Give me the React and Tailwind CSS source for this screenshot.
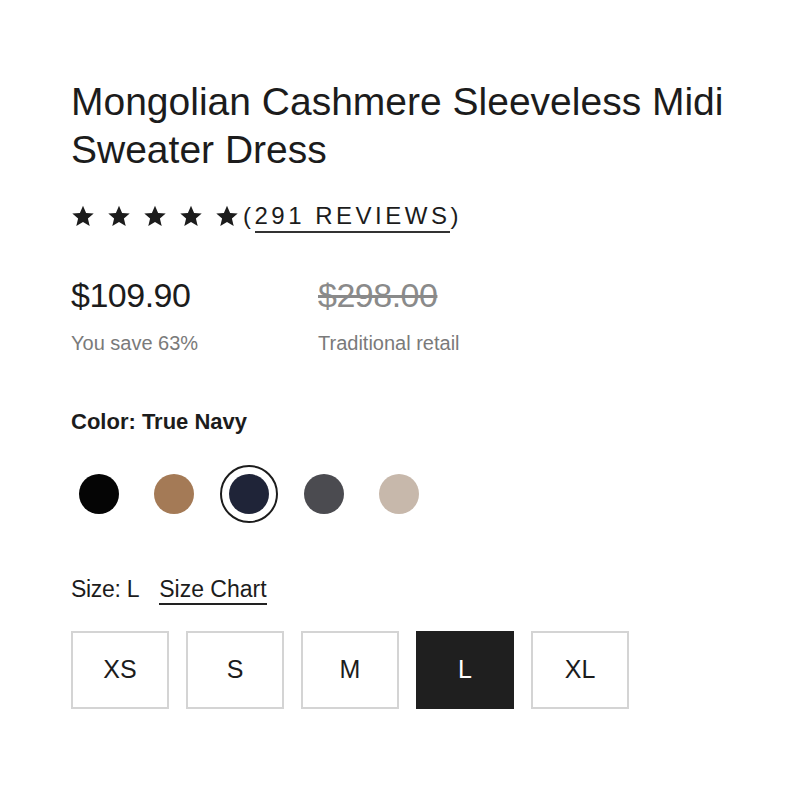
import React from "react";

const swatches = [
  { name: "Black", color: "#050505" },
  { name: "Camel", color: "#a47a56" },
  { name: "True Navy", color: "#1f2438", selected: true },
  { name: "Charcoal", color: "#4b4b50" },
  { name: "Oatmeal", color: "#c7b8ab" },
];

const sizes = ["XS", "S", "M", "L", "XL"];

function Star() {
  return (
    <svg width="24" height="24" viewBox="0 0 24 24" className="shrink-0">
      <path d="M12 1.8l3.1 7.1 7.6.6-5.8 5 1.8 7.5L12 18l-6.7 4 1.8-7.5-5.8-5 7.6-.6z" fill="#1c1c1c" />
    </svg>
  );
}

export default function App() {
  return (
    <div className="w-[800px] h-[800px] bg-white pl-[71px] pt-[78px] text-[#222]" style={{ fontFamily: "'Liberation Sans', Arial, sans-serif" }}>
      <h1 className="text-[39px] leading-[48px] font-normal text-[#1c1c1c] w-[710px]">
        Mongolian Cashmere Sleeveless Midi Sweater Dress
      </h1>

      <div className="flex items-center mt-[26px] h-[32px]">
        <div className="flex gap-[12px]">
          <Star /><Star /><Star /><Star /><Star />
        </div>
        <span className="text-[24px] tracking-[3.5px] text-[#1c1c1c] ml-[4px]">
          (<span className="border-b-2 border-[#333] pb-[2px]">291 REVIEWS</span>)
        </span>
      </div>

      <div className="flex mt-[42px]">
        <div className="w-[247px]">
          <div className="text-[34px] leading-[42px] text-[#1c1c1c] tracking-[-0.5px]">$109.90</div>
          <div className="text-[20px] text-[#7a7a7a] mt-[12px]">You save 63%</div>
        </div>
        <div>
          <div className="text-[34px] leading-[42px] text-[#8a8a8a] line-through tracking-[-0.5px]">$298.00</div>
          <div className="text-[20px] text-[#7a7a7a] mt-[12px]">Traditional retail</div>
        </div>
      </div>

      <div className="text-[22px] font-bold text-[#1c1c1c] mt-[47px]">Color: True Navy</div>

      <div className="flex items-center gap-[17px] mt-[27px] -ml-[1px]">
        {swatches.map((s) => (
          <div
            key={s.name}
            className={
              "w-[58px] h-[58px] rounded-full flex items-center justify-center " +
              (s.selected ? "border-2 border-[#1c1c1c]" : "")
            }
          >
            <div className="w-[40px] h-[40px] rounded-full" style={{ backgroundColor: s.color }} />
          </div>
        ))}
      </div>

      <div className="flex items-baseline mt-[49px] text-[23px] text-[#1c1c1c]">
        <span className="tracking-[-0.3px]">Size: L</span>
        <span className="ml-[20px] border-b-2 border-[#222] leading-[28px]">Size Chart</span>
      </div>

      <div className="flex gap-[17px] mt-[24px]">
        {sizes.map((s) => (
          <div
            key={s}
            className={
              "w-[98px] h-[78px] flex items-center justify-center text-[25px] border-2 " +
              (s === "L" ? "bg-[#1f1f1f] border-[#1f1f1f] text-white" : "border-[#d4d4d4] text-[#1c1c1c]")
            }
          >
            {s}
          </div>
        ))}
      </div>
    </div>
  );
}
